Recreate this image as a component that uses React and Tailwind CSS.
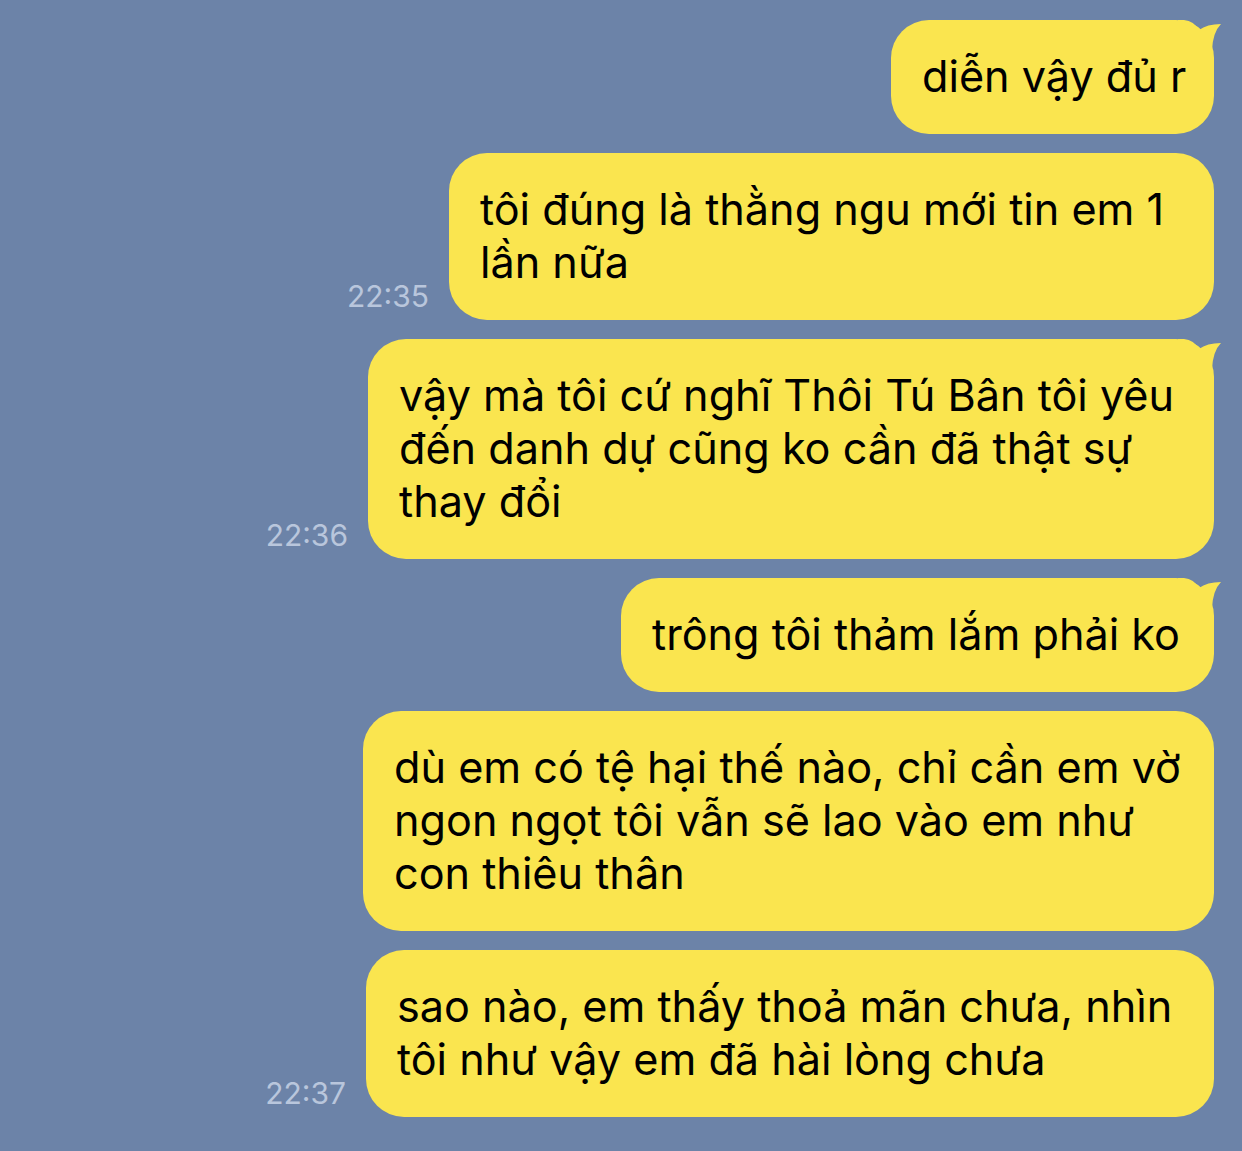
const messages = [
  { lines: ["diễn vậy đủ r"], w: "w-[323px]", tail: true },
  { lines: ["tôi đúng là thằng ngu mới tin em 1", "lần nữa"], w: "w-[765px]", time: "22:35" },
  {
    lines: ["vậy mà tôi cứ nghĩ Thôi Tú Bân tôi yêu", "đến danh dự cũng ko cần đã thật sự", "thay đổi"],
    w: "w-[846px]",
    time: "22:36",
    tail: true,
  },
  { lines: ["trông tôi thảm lắm phải ko"], w: "w-[593px]", tail: true },
  {
    lines: ["dù em có tệ hại thế nào, chỉ cần em vờ", "ngon ngọt tôi vẫn sẽ lao vào em như", "con thiêu thân"],
    w: "w-[851px]",
  },
  { lines: ["sao nào, em thấy thoả mãn chưa, nhìn", "tôi như vậy em đã hài lòng chưa"], w: "w-[848px]", time: "22:37" },
];

const Tail = () => (
  <svg className="absolute -right-[9px] top-0" width="45" height="60" viewBox="0 0 45 60">
    <path d="M0,0 L6,0 Q16,1 21,10 Q29,4 43,4 Q35,12 34,30 L34,60 L0,60 Z" fill="#fae54f" />
  </svg>
);

export default function App() {
  return (
    <div
      className="w-[1242px] h-[1151px] bg-[#6c83a8] pt-5 pr-7 flex flex-col items-end gap-[19px] overflow-hidden"
      style={{ fontFamily: "Inter, 'Noto Sans', sans-serif" }}
    >
      {messages.map((m, i) => (
        <div key={i} className="flex items-end gap-5">
          {m.time && <span className="text-[30px] leading-none text-[#b9c6dc] pb-[9px]">{m.time}</span>}
          <div className={`relative ${m.w} bg-[#fae54f] rounded-[38px] pl-[31px] pt-[30px] pb-[31px] text-[43.2px] leading-[53px] text-black`}>
            {m.tail && <Tail />}
            <div className="relative whitespace-nowrap">
              {m.lines.map((l, j) => (
                <div key={j}>{l}</div>
              ))}
            </div>
          </div>
        </div>
      ))}
    </div>
  );
}
